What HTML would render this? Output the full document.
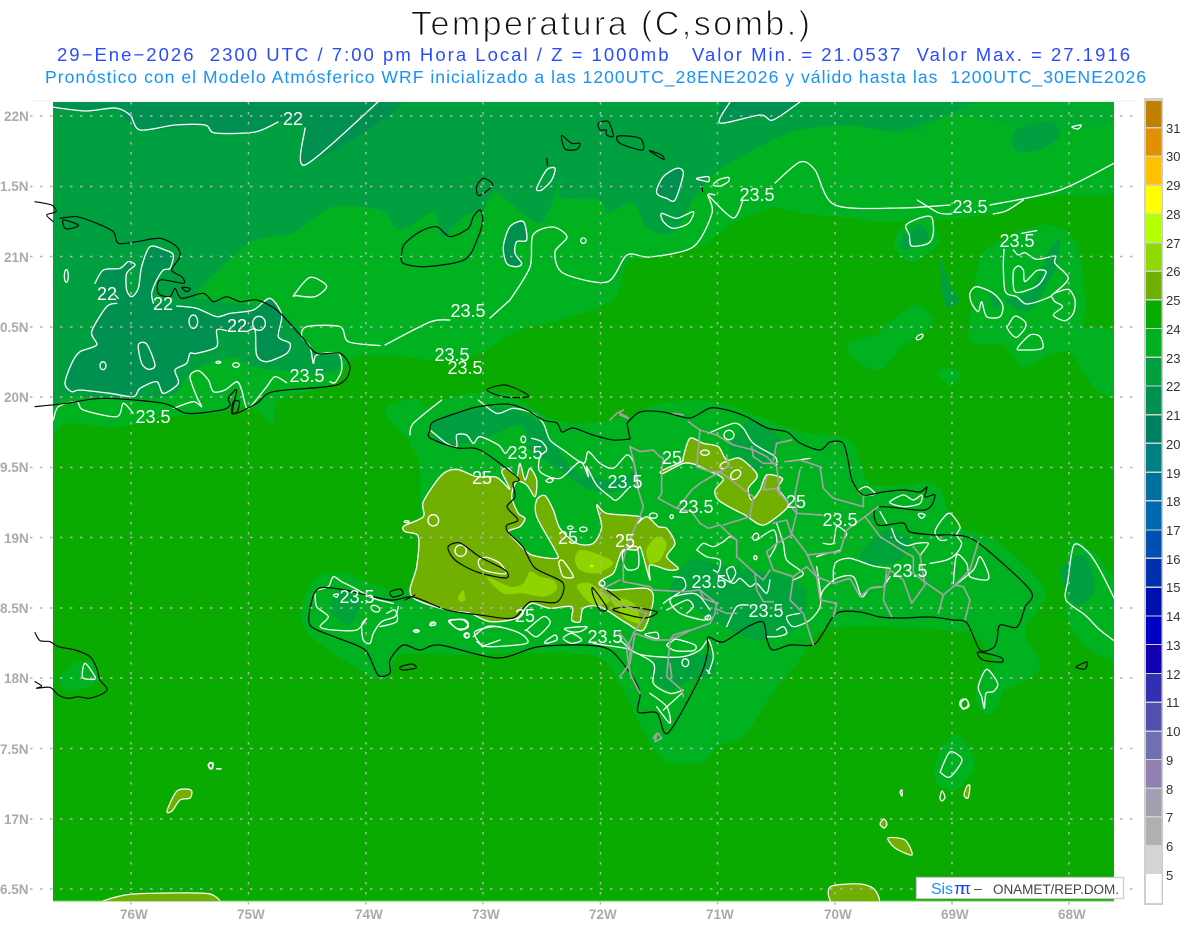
<!DOCTYPE html>
<html><head><meta charset="utf-8"><title>Temperatura</title>
<style>
html,body{margin:0;padding:0;background:#fff}
svg{display:block}
text{font-family:"Liberation Sans",sans-serif;white-space:pre}
.w{fill:none;stroke:#fff;stroke-width:1.3;stroke-linejoin:round;stroke-linecap:round}
.k{fill:none;stroke:#0a0a0a;stroke-width:1.2;stroke-linejoin:round;stroke-linecap:round}
.g{fill:none;stroke:#a3a3a3;stroke-width:1.7;stroke-linejoin:round;stroke-linecap:round}
.z .w{stroke-width:3.9}.z .k{stroke-width:3.6}.z .g{stroke-width:5}
.gr{stroke:#b4b4b4;stroke-width:1.5;stroke-dasharray:2.5 7.5;fill:none}
.l{fill:#fff;font-size:18px;text-anchor:middle}
.a{fill:#aaa;font-size:13.5px;font-weight:bold}
.c{fill:#333;font-size:13px}
</style></head><body>
<svg width="1200" height="927" viewBox="0 0 1200 927" xmlns="http://www.w3.org/2000/svg">
<rect width="1200" height="927" fill="#fff"/>
<text x="411" y="35" font-size="34" textLength="399" lengthAdjust="spacing" fill="#111" stroke="#fff" stroke-width="1">Temperatura (C,somb.)</text>
<text x="57" y="61" font-size="18.500" textLength="1073" lengthAdjust="spacing" fill="#2a4cff">29−Ene−2026  2300 UTC / 7:00 pm Hora Local / Z = 1000mb   Valor Min. = 21.0537  Valor Max. = 27.1916</text>
<text x="45" y="83" font-size="17.500" textLength="1101" lengthAdjust="spacing" fill="#1492ff">Pronóstico con el Modelo Atmósferico WRF inicializado a las 1200UTC_28ENE2026 y válido hasta las  1200UTC_30ENE2026</text>

<rect x="30" y="100.500" width="1107" height="1" fill="#eee"/>
<!-- map base -->
<rect x="53" y="102" width="1061" height="799" fill="#0aab00"/>
<rect x="53" y="900.500" width="1061" height="1" fill="#5fd04f"/>
<clipPath id="m"><rect x="53" y="102" width="1061" height="799"/></clipPath>
<g clip-path="url(#m)">
<!-- 23-24 fields -->
<g fill="#00b220">
<path d="M30 80 1140 80 1140 185 1040 197 1000 212 960 218 880 222 850 218 800 213 773 208 733 223 700 247 650 257 627 263 613 300 560 320 520 330 460 360 380 355 350 360 333 383 280 400 273 423 250 407 217 413 167 417 117 427 67 423 30 432Z"/>
<path d="M430 405 500 392 560 422 625 418 660 403 720 403 800 432 850 440 872 485 935 484 955 525 995 540 1045 590 1025 632 1040 668 1000 690 990 655 960 632 830 628 800 660 775 690 745 735 720 745 700 762 665 760 640 725 620 685 590 655 450 655 400 655 380 680 305 630 310 585 340 572 410 588 420 470 410 440Z"/>
<path d="M900 228 925 215 940 240 915 262 895 250ZM975 285 985 250 1040 225 1075 240 1085 300 1078 345 1050 355 1023 367 1003 345 970 340ZM1058 330 1120 333 1120 395 1097 390 1070 350ZM1065 590 1072 540 1100 560 1125 600 1125 660 1090 650 1070 625ZM880 332 915 305 933 320 923 333 900 347 880 350ZM937 372 950 368 962 375 950 385ZM848 345 880 335 900 345 880 370 855 360ZM940 750 958 735 975 765 955 790 935 780ZM975 700 985 665 1002 690 990 715ZM60 675 90 660 100 680 80 690 65 690ZM385 410 420 400 430 440 410 440Z"/>
<path d="M915 80 1130 80 1130 118 1060 130 1020 128 990 120 950 115 925 130 908 130Z" fill="#00ac2c"/>
</g>
<!-- 22-23 field -->
<path fill="#00a040" d="M30 80 930 80 905 130 850 125 800 130 773 140 717 172 693 200 673 233 647 227 633 203 607 213 600 200 560 197 563 173 540 223 497 193 483 210 463 217 443 237 433 213 400 230 380 210 333 207 293 233 250 243 197 293 213 300 277 310 300 333 317 353 340 357 337 370 310 373 253 367 233 357 193 370 167 397 70 397 30 402Z"/>
<g fill="#00a040">
<path d="M1015 130 1050 122 1060 135 1040 150 1015 150ZM1005 300 1030 290 1050 250 1060 240 1055 270 1030 310ZM900 240 920 225 928 240 905 250ZM940 260 952 290 960 300 945 305ZM1060 570 1085 555 1095 590 1075 605ZM988 294 1000 300 995 310Z"/>
<path d="M433 423 460 412 510 408 540 423 552 440 575 470 610 480 640 470 625 490 590 490 560 470 530 450 520 425 480 440 440 445Z"/>
<path d="M690 560 720 565 780 575 805 590 800 625 760 640 720 625 690 605 670 590ZM750 420 780 440 760 470 730 450ZM860 555 885 530 910 540 900 560 870 565ZM655 660 710 655 712 675 690 680 670 690 655 680ZM340 590 360 600 350 625 330 610Z" fill="#00a23a"/>
</g>
<!-- 21-22 -->
<g fill="#009050">
<path d="M30 85 30 106 85 110 115 108 140 130 205 125 215 133 255 132 278 122 305 128 305 165 400 85Z"/>
<path d="M735 85 720 123 760 115 773 120 820 85Z"/>
<g transform="translate(0 200) scale(.33333)"><path d="M285 250 310 210 360 205 385 185 405 195 380 220 380 270 395 290 415 265 425 200 450 140 495 150 520 165 510 205 490 210 470 240 455 280 460 310 530 318 590 325 650 350 690 340 760 330 810 295 845 345 835 410 870 430 860 460 800 485 770 465 765 390 740 395 690 400 650 390 650 440 590 460 570 460 560 490 525 510 535 550 490 580 470 545 420 565 400 590 330 580 240 570 215 575 195 550 215 490 240 455 290 435 275 395 320 320 350 310 295 295 300 265Z"/></g>
<g transform="translate(400 100) scale(.33333)"><path d="M770 270 790 230 830 205 850 220 825 300 800 295 775 285ZM310 440 330 380 370 365 380 420 350 425 345 460 365 490 350 500 320 490Z"/></g>
</g>
<!-- olive -->
<g class="z" transform="translate(380 400) scale(.33333)">
<path fill="#72b000" stroke="#fff" stroke-width="3.9" stroke-linejoin="round" d="M72 378 130 350 130 305 185 225 230 208 290 230 350 232 390 268 365 215 385 205 410 230 420 190 435 240 450 205 470 240 465 290 440 255 410 245 395 290 415 340 435 355 420 380 385 395 415 430 455 465 530 475 525 450 470 350 470 300 495 287 520 330 540 385 590 430 640 430 665 380 650 315 680 340 780 350 770 372 800 350 835 380 860 385 885 430 860 470 895 505 865 510 810 495 810 540 790 470 780 440 770 450 730 450 715 480 700 520 660 545 690 570 800 565 820 600 790 690 740 670 660 620 610 625 600 665 575 660 575 620 510 625 460 610 440 620 410 655 330 665 270 640 200 630 110 600 90 570 110 500 115 410 75 395Z"/>
<g fill="#8fd400">
<path d="M320 530 390 560 430 550 450 515 480 530 520 540 530 570 490 590 430 580 370 580Z"/>
<path d="M585 480 600 450 660 465 700 490 650 520 600 510Z"/>
<path d="M800 450 830 410 860 430 840 480 810 490Z"/>
<path d="M590 560 630 550 690 600 640 615ZM690 590 760 610 780 670 730 650ZM235 590 250 570 255 600 240 605Z"/>
</g>
<ellipse cx="635" cy="498" rx="6" ry="4" fill="#b4ff00"/>
<g fill="#00b220" class="w">
<ellipse cx="160" cy="361" rx="16" ry="17"/>
<ellipse cx="242" cy="452" rx="17" ry="17"/>
<path d="M296 480 320 472 360 490 378 520 340 518 302 505Z"/>
<path d="M537 485 550 483 580 530 550 530 540 505Z"/>
<path d="M730 455 770 440 775 500 745 510 730 490Z"/>
<ellipse cx="666" cy="550" rx="9" ry="8"/>
<path d="M508 235 520 240 510 248 498 243Z"/>
<ellipse cx="80" cy="365" rx="7" ry="3"/>
<ellipse cx="571" cy="383" rx="8" ry="5"/>
<ellipse cx="610" cy="388" rx="11" ry="7"/>
</g>
</g>
<g class="z" transform="translate(620 400) scale(.33333)">
<path fill="#72b000" stroke="#fff" stroke-width="3.9" stroke-linejoin="round" d="M125 212 185 185 190 170 210 115 250 130 295 140 320 180 360 175 412 225 385 265 395 300 420 270 440 225 487 235 475 265 505 310 490 335 440 372 415 372 375 345 345 330 295 300 285 270 310 240 295 225 270 215 230 195 190 190 130 220Z"/>
<g fill="#00b220" class="w"><ellipse cx="255" cy="158" rx="13" ry="8"/><ellipse cx="347" cy="224" rx="17" ry="12" transform="rotate(-40 347 224)"/><ellipse cx="313" cy="196" rx="14" ry="9" transform="rotate(-30 313 196)"/></g>
<g fill="#72b000" class="w">
<path d="M715 272 740 260 765 282 730 286Z"/>
<path d="M1075 860 1100 808 1133 850 1120 875 1098 880 1093 925 1085 890Z"/>
<path d="M320 510 338 500 347 520 333 545 325 530Z"/>
<path d="M155 725 170 718 225 735 220 752 165 752 140 735Z"/>
<path d="M75 703 110 697 115 715 95 712Z"/>
<path d="M255 652 268 645 272 655 262 660Z"/>
</g>
<ellipse cx="1032" cy="911" rx="13" ry="14" class="w" fill="none"/>
<ellipse cx="196" cy="788" rx="10" ry="12" class="w" fill="none"/>
<ellipse cx="327" cy="105" rx="15" ry="14" class="w" fill="none"/>
<ellipse cx="155" cy="350" rx="5" ry="6" class="w" fill="none"/>
<ellipse cx="407" cy="410" rx="8" ry="11" class="w" fill="none" transform="rotate(30 407 410)"/>
<ellipse cx="406" cy="473" rx="5" ry="6" class="w" fill="none"/>
<ellipse cx="100" cy="347" rx="12" ry="8" class="w" fill="none"/>
</g>
<g fill="#72b000" stroke="#fff" stroke-width="1.2" stroke-linejoin="round">
<path d="M103 905 125 895 170 893 210 894 212 905Z"/>
<path d="M830 887 860 884 875 890 877 905 835 905Z"/>
<path d="M167 811 177 791 191 790 190 798 180 800 172 811Z"/>
<path d="M888 838 905 840 912 855 895 848Z"/>
<path d="M964 795 967 786 970 786 968 798Z"/>
<path d="M880 824 884 819 887 824 884 828Z"/>
</g>
<!-- white contours -->
<g class="w">
<path d="M45 106 85 111 115 108 130 115 140 130 175 125 205 125 215 133 255 132 278 122M305 128 305 165 378 102M730 102 720 123 760 115 773 120 800 102"/>
<path d="M510 300 490 318M450 320 430 322 385 345M715 195 708 195 712 213 693 247 650 257 627 255 607 282 563 273 555 252 567 237 553 227 533 235 530 267 510 300"/>
<path d="M708 195 733 218 743 200M775 183 800 162 815 170 835 205 900 208 950 205M990 205 1060 190 1120 160"/>
<path d="M1120 610 1100 570 1088 552 1074 545 1068 580 1066 600 1085 615 1100 630 1120 645"/>
<path d="M941 770 950 752 962 760 950 777 941 773ZM961 703 966 699 969 706 963 709ZM940 798 942 791 945 797 942 801ZM900 792 902 790 902 796ZM1072 127 1081 125 1078 129ZM208 765 213 763 212 769ZM217 769 221 769"/>
</g>
<g class="z" transform="translate(880 200) scale(.33333)"><g class="w">
<path d="M112 0 175 38 215 42M340 42 380 32 430 0"/>
<path d="M78 75 125 52 155 52 160 100 145 130 95 138 88 105Z"/>
<path d="M425 100 470 92M372 148 370 200 376 275 410 290 440 312 500 295 522 280 565 235 525 190 525 168 470 178 435 158 415 165 400 150"/>
<path d="M400 215 415 198 430 210 435 245 470 212 498 215 480 250 450 268 405 275Z"/>
<path d="M270 280 290 260 340 280 368 315 360 350 320 350 305 305 295 335 275 310Z"/>
<path d="M522 280 565 268 585 300 580 340 555 362 520 345 548 320 525 305 515 290"/>
<path d="M385 375 405 348 435 365 435 385 410 412 392 400 380 380Z"/>
<path d="M412 445 450 405 480 410 487 445 430 450Z"/>
<ellipse cx="119" cy="411" rx="12" ry="6" transform="rotate(-35 119 411)"/>
</g></g>
<g class="z" transform="translate(0 200) scale(.33333)"><g class="w">
<path d="M285 250 310 210 360 205 385 185 405 195 380 220 380 270 395 290 415 265 425 200 450 140 495 150 520 165 510 205 490 210 470 240 455 280 460 310M530 318 590 325 650 350 690 340 760 330 810 295 845 345 835 410 870 430 860 460 800 485 770 465 765 390 740 395M680 392 650 390 650 440 590 460 570 460 560 490 525 510 535 550 490 580 470 545 420 565 400 590 330 580 240 570 215 575 195 550 215 490 240 455 290 435 275 395 320 320 350 310M345 285 355 295"/>
<path d="M415 435 440 432 465 495 445 508 425 490Z"/>
<ellipse cx="309" cy="497" rx="9" ry="12"/>
<ellipse cx="580" cy="365" rx="13" ry="20"/>
<ellipse cx="777" cy="370" rx="19" ry="21"/>
<ellipse cx="199" cy="228" rx="6" ry="19"/>
<ellipse cx="708" cy="495" rx="10" ry="7"/>
<ellipse cx="655" cy="487" rx="7" ry="3"/>
<path d="M882 285 930 232 980 258 945 290 890 287Z"/>
<path d="M160 660 175 620 230 605 250 630 350 650 370 610 400 640M520 625 580 605 605 620 590 590 570 530 595 512 625 540 640 575 675 570 710 545 725 570 740 625 760 610 800 560 825 530 860 548M990 545 1005 548 1025 510 1015 460 950 465 940 490 930 440 905 410 920 380 1020 380 1045 425 1140 437"/>
</g></g>
<g class="z" transform="translate(400 100) scale(.33333)"><g class="w">
<path d="M410 265 440 210 465 205 455 240 425 270Z"/>
<path d="M770 270 790 230 830 205 850 220 825 300 800 295 775 285Z"/>
<path d="M785 340 830 355 880 335 865 370 820 385 790 365Z"/>
<path d="M890 235 925 230 925 245 900 240ZM940 255 955 240 985 232 985 245 960 258Z"/>
<ellipse cx="550" cy="422" rx="8" ry="8" transform="rotate(40 550 422)"/>
<path d="M310 440 330 380 370 365 380 420 350 425 345 460 365 490 350 500 320 490Z"/>
</g></g>
<g class="z" transform="translate(0 600) scale(.33333)"><g class="w"><ellipse cx="632" cy="497" rx="6" ry="10"/><path d="M650 506 662 506"/></g>
<path d="M210 200 250 185 290 215 285 245 230 245Z" fill="#00b220"/><path class="w" d="M255 190 285 230 280 238 248 232Z"/></g>
<!-- Haiti white contours -->
<g class="z" transform="translate(380 400) scale(.33333)"><g class="w">
<path d="M90 105 100 70 185 0M150 90 200 130 230 140 230 105 260 105 280 130 300 110 355 135 375 160 385 150"/>
<path d="M295 0 350 40 400 25 460 40 490 70 510 120 550 150 610 190 625 155 660 190 700 205 740 165 760 185 770 230 775 265"/>
<path d="M455 115 485 125 500 150 480 170 480 215 540 235 600 185 625 230 620 200 650 255 690 290 710 300 745 265"/>
<ellipse cx="430" cy="118" rx="7" ry="10"/>
<path d="M0 680 50 665 45 630 20 640M210 660 250 660 265 680 240 690 210 670ZM285 695 350 680 420 700 440 730 330 740 300 730ZM440 690 490 650 510 670 470 710 440 690ZM495 725 525 705 530 720 500 730ZM555 685 620 680 600 695 570 695ZM550 715 575 700 605 720 575 730ZM255 705 265 700 268 710 258 712ZM150 672 165 668 165 675 152 677ZM100 692 118 692 108 697Z"/>
<path d="M640 730 740 745"/>
</g></g>
<g class="z" transform="translate(620 400) scale(.33333)"><g class="w">
<path d="M265 100 340 70 370 85 400 130 465 170 470 195M495 185 570 175"/>
<path d="M640 510 650 485 690 475 760 498 810 505M640 510 640 545M810 530 790 560M600 600 610 570 650 535 700 530 725 590 750 565 790 560"/>
<path d="M230 450 250 430 280 440 310 425 330 410 350 420M230 450 260 470 300 480 295 515 280 510"/>
<path d="M160 530 190 535 195 565 150 600 180 640 250 660 265 650M130 610 160 590 215 580 240 590 270 630M140 630 200 600 220 620 200 640"/>
<path d="M300 530 340 550 360 535 390 560 410 550 440 580 450 540M470 370 490 430 500 480 550 520 520 540M410 420 460 390 470 430 450 470M590 500 600 570 600 620 570 660 520 680 500 650 540 640M320 680 350 620 385 615M440 710 470 710 500 700 490 680 470 690"/>
<path d="M610 430 640 430 650 380 680 400 670 420 660 450 620 460 590 470"/>
<path d="M930 490 980 480 1010 460 1025 430 1010 405 1020 380 990 340 965 360 945 395 960 420 980 420M815 385 830 420 860 437 890 430 925 430 905 460 900 470M900 340 915 345 905 355 895 345ZM810 305 850 285 880 300 905 285 900 310 860 320 825 315ZM780 335 800 370M1000 560 1060 510 1080 470 1105 520 1100 540 1050 530 1040 490 1010 465 1000 550"/>
<path d="M0 720 50 760 110 770 190 770 240 750 265 720 280 770 265 820M260 810 270 820M20 745 100 790 100 850 150 880 190 870M90 880 140 920 150 970 110 920M130 930 185 880"/>
</g></g>
<g class="z" transform="translate(300 560) scale(.33333)"><g class="w">
<path d="M50 90 85 80 100 50 125 65 165 85 220 115 280 130M295 140 285 170 245 185 220 220 210 250 190 240 185 195 200 175 170 210 100 210 60 200 85 170 50 140 45 100"/>
<ellipse cx="226" cy="146" rx="14" ry="9" transform="rotate(25 226 146)"/>
<ellipse cx="399" cy="191" rx="8" ry="5"/>
<ellipse cx="349" cy="213" rx="8" ry="4"/>
<ellipse cx="500" cy="226" rx="8" ry="8"/>
<path d="M450 183 490 178 505 190 495 205 470 205Z"/>
<path d="M520 230 560 200 600 200M550 260 530 245M545 260 600 240M100 105 115 102 110 112Z"/>
</g></g>
</g>
<!-- black coast (not clipped: runs past the left map edge) -->
<g class="k">
<path d="M430 430 433 422 457 413 477 407 507 404 527 410 543 420 557 423 562 432 573 428 593 435 613 440 630 439"/>
<path d="M627 423 640 412 663 412 690 418 710 408 727 410 747 417 767 428 787 432 800 443 820 450 830 442 843 443 848 460 852 480 863 495 883 492 903 490 920 492 927 487 925 497 935 495 925 510 878 507 878 525 903 523 910 532 935 535 953 535 977 542 1030 590 1025 607 1017 627 1000 625 997 640 993 648 980 650 967 623 953 620 930 617 903 618 880 617 860 612 837 613 823 633 813 645 790 645 773 650 767 640 763 622 747 627 723 642 708 637 708 650 700 677 668 733 657 713 638 712 640 693 630 673 610 650 583 645 537 647 497 658 440 645 420 650 403 645 390 660 390 673 378 675 365 650 335 637 310 625 312 600 320 588 345 590 390 600 413 597 447 610 480 615 513 618 530 602 557 602 563 583 535 568 523 547 508 532 507 525 518 520 507 507 515 497 513 483 518 478 480 450 457 448 430 438 430 430"/>
<path d="M627 423 630 439"/>
<path d="M448 547 460 543 480 557 505 570 506 578 477 572 455 560Z"/>
<path d="M593 588 607 608 600 610 593 595ZM630 607 657 612 643 618 613 610ZM607 590 620 600"/>
<path d="M487 390 505 385 525 393 527 397 505 397ZM400 667 412 664 416 668 403 670ZM390 592 400 589 403 594 393 597ZM405 600 415 595M978 652 1000 657 1002 662 983 660ZM1076 667 1087 662 1085 669Z"/>
</g>
<g class="z" transform="translate(0 200) scale(.33333)"><g class="k">
<path d="M105 5 155 15 168 35 140 45 160 65M180 55 230 50 290 70 340 95 355 130 410 125 480 115 530 140 540 170 515 210 545 230 550 250 480 240 475 280 510 290 525 265 545 295 610 280 640 305 680 290 720 305 770 300 830 330 905 410 950 460 1020 460 1050 505 1010 555 820 575 770 610 700 640 710 570 685 595 690 615 665 630 560 640 490 610 310 595 200 610 105 620"/>
<path d="M190 60 235 75 215 85 195 85ZM545 262 570 265 560 275ZM695 640 712 635 718 605 700 605Z"/>
</g></g>
<g class="z" transform="translate(400 100) scale(.33333)"><g class="k">
<path d="M5 460 15 430 60 395 110 380 150 410 205 385 220 350 240 330 248 360 235 410 195 478 80 500 10 490ZM230 260 250 235 278 255 237 287ZM440 175 443 197M485 107 515 130 540 130 530 148 495 147ZM595 70 625 65 640 108 620 105 618 90 600 90ZM655 108 720 115 727 150 660 130ZM748 152 785 165 790 178ZM905 255 908 275"/>
</g></g>
<g class="z" transform="translate(0 600) scale(.33333)"><g class="k">
<path d="M105 98 120 122 150 125 175 140 225 150 270 170 290 205 300 240 322 268 300 285 265 295 235 290 205 295 175 285 150 262 110 265 125 258 105 245"/>
</g></g>
<!-- gray provinces -->
<g class="z" transform="translate(620 400) scale(.33333)"><g class="g">
<path d="M30 140 60 155 100 150 120 170 130 175 125 210 125 280 115 295 170 325 215 335 240 370 265 385 300 375 325 400 350 420 350 470 405 520 410 570 430 605 460 605"/>
<path d="M205 65 240 90 290 105 340 135 400 150 440 170 470 200 480 280 530 340 605 345"/>
<path d="M240 90 230 200 270 215 300 215 240 250 215 270 200 290 170 325"/>
<path d="M515 120 470 130 460 180M395 140 400 170 430 190 470 190M495 185 540 180 600 200 610 265 640 295 730 320 730 290"/>
<path d="M540 210 525 280 530 340 515 400 560 460 590 530 640 550 690 535 720 590 750 565 790 560 810 510"/>
<path d="M320 165 325 200 300 215 400 290 390 350 310 375M440 230 430 270 470 265 480 285"/>
<path d="M460 370 500 360 515 405 470 430 440 455 460 510 520 530 510 600 550 640 580 735"/>
<path d="M800 510 790 600 815 650M520 530 560 500 590 530M560 465 660 455 680 390 735 350 775 320M735 350 780 410 860 460 880 470 880 520 920 550 970 585 955 640"/>
<path d="M880 440 900 465 915 555 875 610 850 540 810 510M970 585 1005 555 1050 510 1075 425M1005 555 1030 560 1050 600 1035 660M600 600 590 530M600 600 650 610 640 650"/>
<path d="M10 545 90 560 100 570 190 575 240 570 290 610 285 640 270 670 215 690 150 720 140 830 185 870 190 890M240 570 250 595 290 610M405 520 430 540 450 510M150 720 160 705 210 690M150 790 155 830M30 790 35 760 45 700 100 720 150 720M285 625 320 640 350 640"/>
<path d="M110 1000 100 1015 115 1000 125 1015 105 1025Z"/>
<path d="M30 140 45 200 50 255 70 320 60 350 50 370 20 440 10 480 10 545"/>
<path d="M0 700 30 740 30 790 0 830"/>
<path d="M-30 60 -10 40 10 30M160 40 190 45M0 40 20 50"/>
</g></g>
<g class="z" transform="translate(380 400) scale(.33333)"><g class="g">
<path d="M720 540 660 570 725 615 800 640 760 700 740 750 750 820 780 880"/>
<path d="M720 45 745 55"/>
</g></g>
<!-- labels -->
<g class="l">
<text x="293" y="125">22</text><text x="757" y="201">23.5</text><text x="970" y="213">23.5</text><text x="1017" y="247">23.5</text>
<text x="107" y="300">22</text><text x="163" y="310">22</text><text x="237" y="332">22</text><text x="468" y="317">23.5</text>
<text x="452" y="361">23.5</text><text x="465" y="374">23.5</text><text x="307" y="382">23.5</text><text x="153" y="423">23.5</text>
<text x="525" y="459">23.5</text><text x="482" y="484">25</text><text x="672" y="464">25</text><text x="625" y="488">23.5</text>
<text x="696" y="513">23.5</text><text x="796" y="508">25</text><text x="840" y="526">23.5</text><text x="568" y="544">25</text>
<text x="625" y="547">25</text><text x="910" y="577">23.5</text><text x="709" y="588">23.5</text><text x="357" y="603">23.5</text>
<text x="525" y="622">25</text><text x="766" y="617">23.5</text><text x="605" y="643">23.5</text>
</g>
<!-- grid -->
<path class="gr" d="M30 116H1137M30 186.500H1137M30 256.500H1137M30 327H1137M30 397H1137M30 467.500H1137M30 537.500H1137M30 608H1137M30 678H1137M30 748.500H1137M30 819H1137M30 889H1137"/>
<path class="gr" d="M131 102V906M248.500 102V906M366 102V906M483 102V906M600.500 102V906M717.500 102V906M835 102V906M952 102V906M1069 102V906"/>
<!-- axis labels -->
<g class="a">
<text x="4" y="121">22N</text><text x="0" y="191">1.5N</text><text x="4" y="262">21N</text><text x="0" y="332">0.5N</text><text x="4" y="402">20N</text><text x="0" y="472">9.5N</text><text x="4" y="543">19N</text><text x="0" y="613">8.5N</text><text x="4" y="683">18N</text><text x="0" y="754">7.5N</text><text x="4" y="824">17N</text><text x="0" y="894">6.5N</text>
<text x="120" y="919">76W</text><text x="237" y="919">75W</text><text x="355" y="919">74W</text><text x="472" y="919">73W</text><text x="589" y="919">72W</text><text x="706" y="919">71W</text><text x="824" y="919">70W</text><text x="941" y="919">69W</text><text x="1058" y="919">68W</text>
</g>
<!-- logo box -->
<rect x="916.500" y="877.500" width="207" height="21" fill="#fff" stroke="#ccc" stroke-width="1.2"/>
<text x="931" y="894" font-size="16" textLength="22" fill="#1a90ff">Sis</text>
<text x="954" y="894" font-size="17" textLength="17" fill="#2040ff">ππ</text>
<text x="974" y="893" font-size="14" fill="#444">–</text>
<text x="993" y="894" font-size="13.500" textLength="126" lengthAdjust="spacing" fill="#444">ONAMET/REP.DOM.</text>
<!-- colorbar -->
<rect x="1144.500" y="98.500" width="18" height="806" fill="#d0d0d0" stroke="#ccc" stroke-width="1"/>
<g>
<rect x="1146" y="101" width="15.500" height="26" fill="#c08000"/>
<rect x="1146" y="128.500" width="15.500" height="27" fill="#e09000"/>
<rect x="1146" y="157" width="15.500" height="27.500" fill="#ffc000"/>
<rect x="1146" y="186" width="15.500" height="27.500" fill="#ffff00"/>
<rect x="1146" y="214.500" width="15.500" height="27.500" fill="#b4ff00"/>
<rect x="1146" y="243.500" width="15.500" height="27" fill="#90d800"/>
<rect x="1146" y="272" width="15.500" height="27" fill="#70b000"/>
<rect x="1146" y="300.500" width="15.500" height="27.500" fill="#0aab00"/>
<rect x="1146" y="329" width="15.500" height="27.500" fill="#00b020"/>
<rect x="1146" y="358" width="15.500" height="27.500" fill="#00a040"/>
<rect x="1146" y="386.500" width="15.500" height="27.500" fill="#009050"/>
<rect x="1146" y="415.500" width="15.500" height="27" fill="#008060"/>
<rect x="1146" y="444" width="15.500" height="27.500" fill="#008080"/>
<rect x="1146" y="473" width="15.500" height="27" fill="#0070a0"/>
<rect x="1146" y="501.500" width="15.500" height="28" fill="#0068b0"/>
<rect x="1146" y="530.500" width="15.500" height="27" fill="#0050b0"/>
<rect x="1146" y="559" width="15.500" height="27.500" fill="#0030b0"/>
<rect x="1146" y="588" width="15.500" height="27.500" fill="#0010b0"/>
<rect x="1146" y="616.500" width="15.500" height="27.500" fill="#0000c0"/>
<rect x="1146" y="645" width="15.500" height="28" fill="#1000b0"/>
<rect x="1146" y="674" width="15.500" height="27.500" fill="#3030b0"/>
<rect x="1146" y="703" width="15.500" height="27.500" fill="#5050b0"/>
<rect x="1146" y="732" width="15.500" height="27" fill="#7070b0"/>
<rect x="1146" y="760" width="15.500" height="27.500" fill="#9080b0"/>
<rect x="1146" y="789" width="15.500" height="27" fill="#a0a0b0"/>
<rect x="1146" y="817.500" width="15.500" height="27.500" fill="#b0b0b0"/>
<rect x="1146" y="845.500" width="15.500" height="28.500" fill="#d4d4d4"/>
<rect x="1146" y="874" width="15.500" height="29" fill="#fff"/>
</g>
<g class="c">
<text x="1166" y="133">31</text><text x="1166" y="161">30</text><text x="1166" y="190">29</text><text x="1166" y="219">28</text><text x="1166" y="248">27</text><text x="1166" y="276">26</text><text x="1166" y="305">25</text><text x="1166" y="334">24</text><text x="1166" y="363">23</text><text x="1166" y="391">22</text><text x="1166" y="420">21</text><text x="1166" y="449">20</text><text x="1166" y="478">19</text><text x="1166" y="506">18</text><text x="1166" y="535">17</text><text x="1166" y="564">16</text><text x="1166" y="592">15</text><text x="1166" y="621">14</text><text x="1166" y="650">13</text><text x="1166" y="679">12</text><text x="1166" y="707">11</text><text x="1166" y="736">10</text><text x="1166" y="765">9</text><text x="1166" y="794">8</text><text x="1166" y="822">7</text><text x="1166" y="851">6</text><text x="1166" y="880">5</text>
</g>
</svg>
<script>
/* Round the traced contours and coastlines into smooth curves */
(function(){
var ps=document.querySelectorAll('g[fill] path,path[fill],.w path,path.w,.k path');
for(var i=0;i<ps.length;i++){
 var p=ps[i],d=p.getAttribute('d');
 if(/[HV]/.test(d))continue;
 var subs=d.match(/M[^MZ]*Z?/g)||[],out='';
 for(var s=0;s<subs.length;s++){
  var t=subs[s],closed=/Z$/.test(t),n=t.replace(/[MZ]/g,' ').trim().split(/[\s,]+/).map(Number),a=[];
  for(var j=0;j+1<n.length;j+=2)a.push([n[j],n[j+1]]);
  var L=a.length;if(L<3){out+=t;continue;}
  out+='M'+a[0][0]+' '+a[0][1];
  var m=closed?L:L-1;
  for(var k=0;k<m;k++){
   var p0=closed?a[(k-1+L)%L]:a[Math.max(k-1,0)],p1=a[k],p2=a[(k+1)%L],p3=closed?a[(k+2)%L]:a[Math.min(k+2,L-1)];
   out+='C'+(p1[0]+(p2[0]-p0[0])/7).toFixed(1)+' '+(p1[1]+(p2[1]-p0[1])/7).toFixed(1)+' '+(p2[0]-(p3[0]-p1[0])/7).toFixed(1)+' '+(p2[1]-(p3[1]-p1[1])/7).toFixed(1)+' '+p2[0]+' '+p2[1];
  }
  if(closed)out+='Z';
 }
 p.setAttribute('d',out);
}
})();
</script>
</body></html>
